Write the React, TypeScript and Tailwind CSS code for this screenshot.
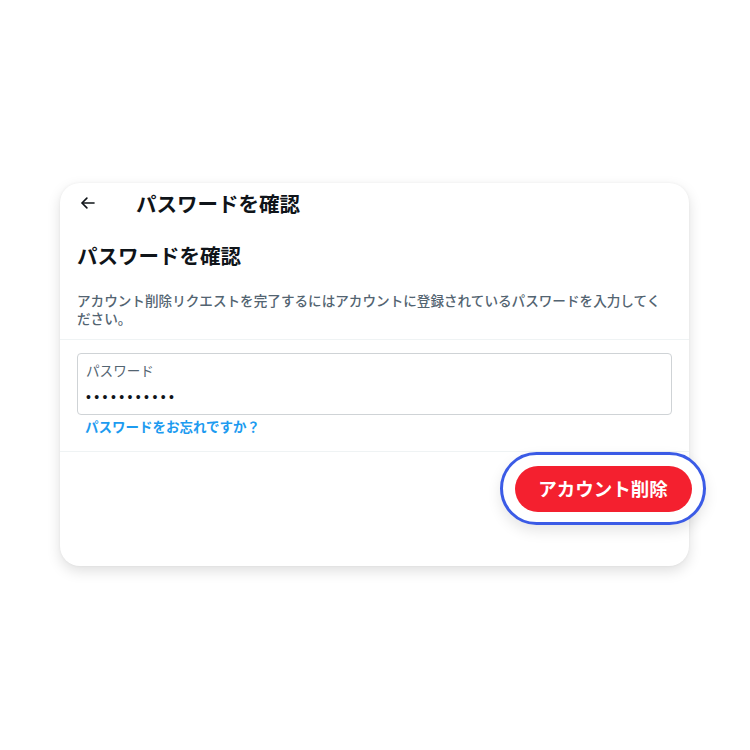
import * as React from 'react';

const font = { fontFamily: '"Noto Sans CJK JP", "Noto Sans", sans-serif' };

function BackArrow() {
  return (
    <svg width="18" height="18" viewBox="0 0 24 24" fill="none" stroke="#0f1419" strokeWidth="2.2" strokeLinecap="round" strokeLinejoin="round">
      <path d="M20 12H4.5" />
      <path d="M10.5 5.5L4 12l6.5 6.5" />
    </svg>
  );
}

export default function App() {
  return (
    <div className="w-[750px] h-[750px] bg-white pt-[183px] pl-[60px]" style={font}>
      <div className="w-[629px] rounded-[20px] bg-white shadow-[0_5px_14px_rgba(0,0,0,0.13),0_0_3px_rgba(0,0,0,0.05)]">
        <div className="h-[40px] flex items-center pl-[19px]">
          <BackArrow />
          <h1 className="ml-[39px] text-[20.5px] leading-[28px] font-bold text-[#0f1419]">パスワードを確認</h1>
        </div>

        <div className="px-[17px]">
          <h2 className="mt-[18px] text-[20.5px] leading-[28px] font-bold text-[#0f1419]">パスワードを確認</h2>
          <p className="mt-[22px] pb-[12px] text-[13.6px] leading-[18px] font-medium text-[#536471]">
            アカウント削除リクエストを完了するにはアカウントに登録されているパスワードを入力してください。
          </p>
        </div>

        <div className="border-t border-[#eff3f4]" />

        <div className="px-[17px] pt-[13px] pb-[16px]">
          <div className="h-[62px] rounded-[4px] border border-[#cfd3d6] px-[8px] pt-[7px]">
            <div className="text-[13.6px] leading-[18px] text-[#536471]">パスワード</div>
            <div className="mt-[9px] text-[14px] leading-[18px] tracking-[3.4px] text-[#0f1419]" style={{ fontFamily: '"Liberation Sans", sans-serif' }}>
              •••••••••••
            </div>
          </div>
          <a className="block mt-[2px] pl-[8px] text-[13.5px] leading-[18px] font-bold text-[#1d9bf0]">パスワードをお忘れですか？</a>
        </div>

        <div className="border-t border-[#eff3f4]" />

        <div className="flex justify-end pb-[41px]">
          <div className="-mr-[17px] rounded-full border-[3px] border-[#3b5be6] bg-white px-[11.5px] py-[10.5px] shadow-[0_6px_14px_rgba(0,0,0,0.1)]">
            <button className="h-[46px] w-[177px] rounded-full bg-[#f4202f] text-[18.5px] font-bold text-white">
              アカウント削除
            </button>
          </div>
        </div>
      </div>
    </div>
  );
}
